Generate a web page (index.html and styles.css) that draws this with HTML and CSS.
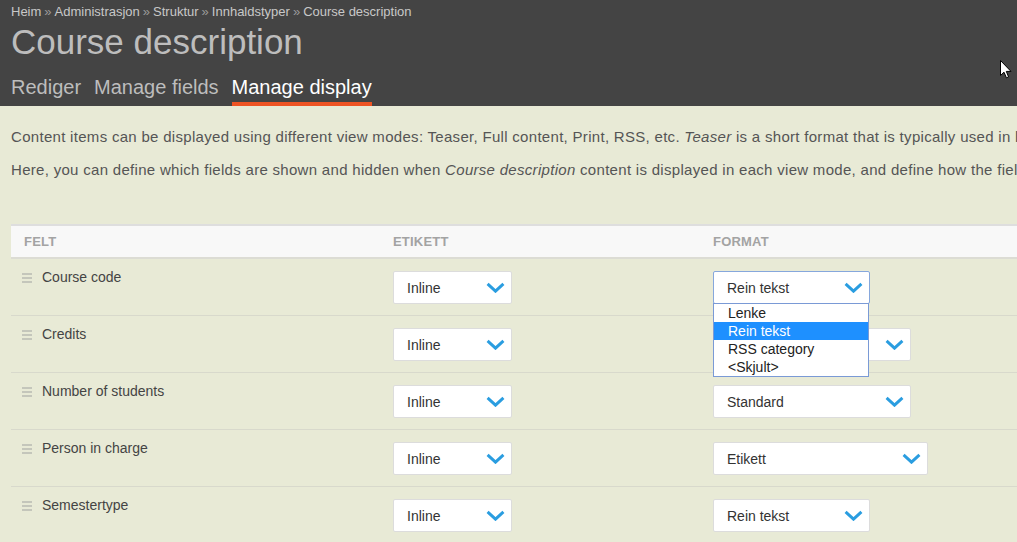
FILE: index.html
```html
<!DOCTYPE html>
<html lang="nn">
<head>
<meta charset="utf-8">
<title>Course description</title>
<link rel="stylesheet" href="styles.css">
</head>
<body>
<header class="top">
  <nav class="crumbs">
    <a>Heim</a><span class="sep">»</span><a>Administrasjon</a><span class="sep">»</span><a>Struktur</a><span class="sep">»</span><a>Innhaldstyper</a><span class="sep">»</span><a>Course description</a>
  </nav>
  <h1 class="title">Course description</h1>
  <ul class="tabs">
    <li class="tab">Rediger</li>
    <li class="tab">Manage fields</li>
    <li class="tab active">Manage display</li>
  </ul>
</header>

<main class="content">
  <p class="help">Content items can be displayed using different view modes: Teaser, Full content, Print, RSS, etc. <em>Teaser</em> is a short format that is typically used in lists of multiple content items. <em>Full content</em> is typically used when the content is displayed on its own page.</p>
  <p class="help">Here, you can define which fields are shown and hidden when <em>Course description</em> content is displayed in each view mode, and define how the fields are displayed in each view mode.</p>

  <div class="table">
    <div class="row head">
      <div class="cell c1">Felt</div>
      <div class="cell c2">Etikett</div>
      <div class="cell c3">Format</div>
    </div>

    <div class="row">
      <div class="cell c1"><span class="handle"><i></i><i></i><i></i></span>Course code</div>
      <div class="cell c2"><div class="sel w118"><span>Inline</span><svg class="chev" viewBox="0 0 18 10"><path d="M1.5 1.5 L9 8.5 L16.5 1.5"/></svg></div></div>
      <div class="cell c3 has-pop">
        <div class="sel w156 focus"><span>Rein tekst</span><svg class="chev" viewBox="0 0 18 10"><path d="M1.5 1.5 L9 8.5 L16.5 1.5"/></svg></div>
        <ul class="pop">
          <li>Lenke</li>
          <li class="on">Rein tekst</li>
          <li>RSS category</li>
          <li>&lt;Skjult&gt;</li>
        </ul>
      </div>
    </div>

    <div class="row">
      <div class="cell c1"><span class="handle"><i></i><i></i><i></i></span>Credits</div>
      <div class="cell c2"><div class="sel w118"><span>Inline</span><svg class="chev" viewBox="0 0 18 10"><path d="M1.5 1.5 L9 8.5 L16.5 1.5"/></svg></div></div>
      <div class="cell c3"><div class="sel w197"><span>Standard</span><svg class="chev" viewBox="0 0 18 10"><path d="M1.5 1.5 L9 8.5 L16.5 1.5"/></svg></div></div>
    </div>

    <div class="row">
      <div class="cell c1"><span class="handle"><i></i><i></i><i></i></span>Number of students</div>
      <div class="cell c2"><div class="sel w118"><span>Inline</span><svg class="chev" viewBox="0 0 18 10"><path d="M1.5 1.5 L9 8.5 L16.5 1.5"/></svg></div></div>
      <div class="cell c3"><div class="sel w197"><span>Standard</span><svg class="chev" viewBox="0 0 18 10"><path d="M1.5 1.5 L9 8.5 L16.5 1.5"/></svg></div></div>
    </div>

    <div class="row">
      <div class="cell c1"><span class="handle"><i></i><i></i><i></i></span>Person in charge</div>
      <div class="cell c2"><div class="sel w118"><span>Inline</span><svg class="chev" viewBox="0 0 18 10"><path d="M1.5 1.5 L9 8.5 L16.5 1.5"/></svg></div></div>
      <div class="cell c3"><div class="sel w214"><span>Etikett</span><svg class="chev" viewBox="0 0 18 10"><path d="M1.5 1.5 L9 8.5 L16.5 1.5"/></svg></div></div>
    </div>

    <div class="row">
      <div class="cell c1"><span class="handle"><i></i><i></i><i></i></span>Semestertype</div>
      <div class="cell c2"><div class="sel w118"><span>Inline</span><svg class="chev" viewBox="0 0 18 10"><path d="M1.5 1.5 L9 8.5 L16.5 1.5"/></svg></div></div>
      <div class="cell c3"><div class="sel w156"><span>Rein tekst</span><svg class="chev" viewBox="0 0 18 10"><path d="M1.5 1.5 L9 8.5 L16.5 1.5"/></svg></div></div>
    </div>
  </div>
</main>

<svg class="cursor" viewBox="0 0 12 19" width="12" height="19"><path d="M0.5 0.5 L0.5 15.5 L4 12.2 L6.4 17.8 L8.6 16.9 L6.3 11.4 L11 11.4 Z" fill="#fff" stroke="#000" stroke-width="1"/></svg>
</body>
</html>
```

FILE: styles.css
```css
html, body {
  margin: 0;
  padding: 0;
}
body {
  width: 1017px;
  height: 542px;
  overflow: hidden;
  background: #e8ead6;
  font-family: "Liberation Sans", Arial, sans-serif;
  color: #555;
  position: relative;
}

.top {
  background: #444;
  height: 106px;
  padding: 0 11px;
  box-sizing: border-box;
  overflow: hidden;
}
.crumbs {
  font-size: 13px;
  line-height: 15px;
  padding-top: 4px;
  color: #c8c8c8;
  white-space: nowrap;
}
.crumbs .sep {
  color: #9a9a9a;
  margin: 0 3px;
}
.title {
  margin: 3px 0 0 0;
  font-size: 35px;
  font-weight: normal;
  line-height: 40px;
  color: #bdbdbd;
  white-space: nowrap;
}
.tabs {
  list-style: none;
  margin: 13px 0 0 0;
  padding: 0;
  display: flex;
  gap: 13px;
}
.tab {
  font-size: 20px;
  line-height: 24px;
  color: #bdbdbd;
  padding-bottom: 3px;
  border-bottom: 4px solid transparent;
  white-space: nowrap;
}
.tab.active {
  color: #fff;
  border-bottom-color: #ee5424;
}

.content {
  padding: 0 0 0 11px;
}
.help {
  margin: 0;
  font-size: 15px;
  line-height: 18px;
  letter-spacing: 0.3px;
  white-space: nowrap;
  color: #555;
}
.help:first-child {
  padding-top: 22px;
}
.help + .help {
  margin-top: 15px;
}

.table {
  margin-top: 45px;
  width: 1100px;
  border-top: 2px solid #dedede;
}
.row {
  display: grid;
  grid-template-columns: 370px 320px 1fr;
  height: 56px;
  border-bottom: 1px solid #d8d9cc;
}
.row.head {
  height: 31px;
  background: #f8f8f8;
  border-bottom: 2px solid #dcdcd4;
  align-items: center;
}
.head .cell {
  font-size: 13px;
  font-weight: bold;
  text-transform: uppercase;
  color: #a3a3a3;
  letter-spacing: 0.2px;
}
.cell {
  padding: 0 12px;
  position: relative;
}
.head .c1 {
  padding-left: 13px;
}
.row:not(.head) .c1 {
  padding-left: 11px;
  padding-top: 10px;
  font-size: 14px;
  line-height: 17px;
  color: #444;
  display: flex;
  align-items: flex-start;
}
.handle {
  display: inline-flex;
  flex-direction: column;
  gap: 2px;
  width: 10px;
  margin: 4px 10px 0 0;
}
.handle i {
  display: block;
  height: 2px;
  background: #c4c6bb;
}
.row:not(.head) .c2,
.row:not(.head) .c3 {
  padding-top: 12px;
}

.sel {
  box-sizing: border-box;
  height: 33px;
  background: #fff;
  border: 1px solid #dcdcdc;
  border-radius: 2px;
  display: flex;
  align-items: center;
  justify-content: space-between;
  padding: 0 6px 0 13px;
  font-size: 14px;
  color: #333;
}
.sel.focus {
  border-color: #86a7dc;
}
.w118 { width: 119px; }
.w156 { width: 157px; }
.w197 { width: 198px; }
.w214 { width: 215px; }
.chev {
  width: 19px;
  height: 11px;
  fill: none;
  stroke: #2a9de0;
  stroke-width: 2.8;
}

.pop {
  position: absolute;
  left: 12px;
  top: 44px;
  width: 156px;
  box-sizing: border-box;
  margin: 0;
  padding: 0;
  list-style: none;
  background: #fff;
  border: 1px solid #7a9ad6;
  z-index: 5;
}
.pop li {
  font-size: 14px;
  line-height: 18px;
  height: 18px;
  padding-left: 14px;
  color: #222;
}
.pop li.on {
  background: #1e90ff;
  color: #fff;
}
.has-pop {
  z-index: 4;
}

.cursor {
  position: absolute;
  left: 1000px;
  top: 60px;
}
```
